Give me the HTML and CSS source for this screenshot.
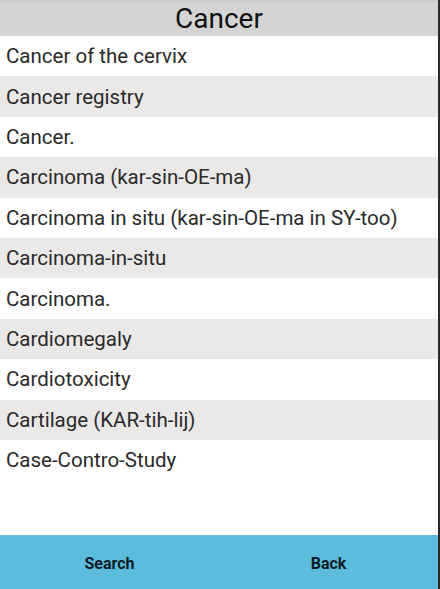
FILE: index.html
```html
<!DOCTYPE html>
<html>
<head>
<meta charset="utf-8">
<link rel="stylesheet" href="styles.css">
</head>
<body>
<div class="app">
  <div class="main">
    <div class="header">Cancer</div>
    <ul class="list">
      <li class="row">Cancer of the cervix</li>
      <li class="row alt">Cancer registry</li>
      <li class="row">Cancer.</li>
      <li class="row alt">Carcinoma (kar-sin-OE-ma)</li>
      <li class="row">Carcinoma in situ (kar-sin-OE-ma in SY-too)</li>
      <li class="row alt">Carcinoma-in-situ</li>
      <li class="row">Carcinoma.</li>
      <li class="row alt">Cardiomegaly</li>
      <li class="row">Cardiotoxicity</li>
      <li class="row alt">Cartilage (KAR-tih-lij)</li>
      <li class="row">Case-Contro-Study</li>
    </ul>
    <div class="footer">
      <div class="btn">Search</div>
      <div class="btn">Back</div>
    </div>
  </div>
  <div class="edge"></div>
</div>
</body>
</html>
```

FILE: styles.css
```css
html, body {
  margin: 0;
  padding: 0;
  width: 440px;
  height: 589px;
  overflow: hidden;
  background: #ffffff;
  font-family: Roboto, "Liberation Sans", sans-serif;
}
.app {
  display: flex;
  width: 440px;
  height: 589px;
}
.main {
  width: 438px;
  display: flex;
  flex-direction: column;
}
.edge {
  width: 2px;
  background: #2a2a2a;
}
.header {
  height: 36px;
  background: linear-gradient(#c8c8c8, #d4d4d4 4px, #d4d4d4);
  text-align: center;
  font-size: 28px;
  line-height: 37px;
  color: #111111;
}
.list {
  list-style: none;
  margin: 0;
  padding: 0;
  flex: 1;
}
.row {
  height: 40.4px;
  display: flex;
  align-items: center;
  padding-left: 6px;
  font-size: 20.5px;
  color: #2a2a2a;
}
.alt {
  background: #ebe8e8;
}
.footer {
  height: 54px;
  background: #5bbcdc;
  display: flex;
}
.btn {
  flex: 1;
  display: flex;
  align-items: center;
  justify-content: center;
  padding-top: 2px;
  font-weight: bold;
  font-size: 16px;
  color: #0d1b26;
}
```
